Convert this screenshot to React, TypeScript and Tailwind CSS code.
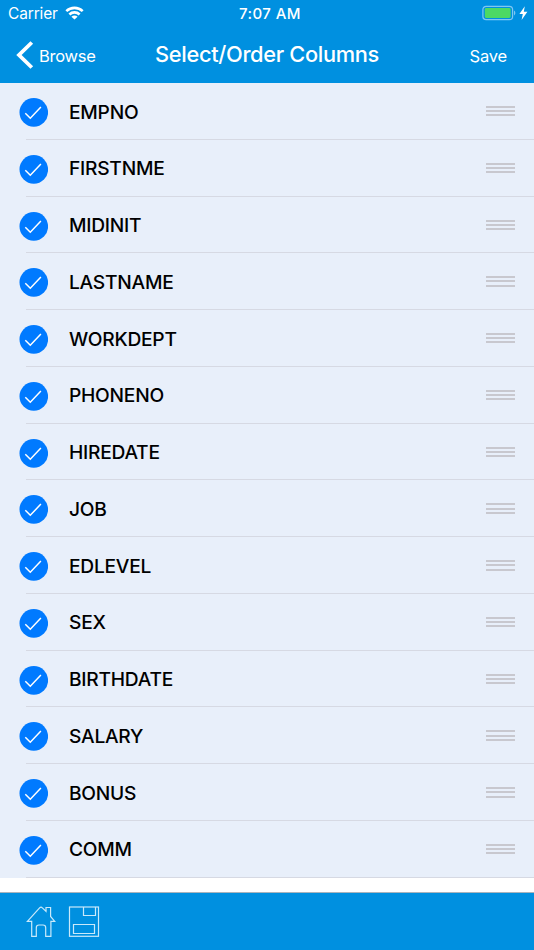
const columns = [
  "EMPNO",
  "FIRSTNME",
  "MIDINIT",
  "LASTNAME",
  "WORKDEPT",
  "PHONENO",
  "HIREDATE",
  "JOB",
  "EDLEVEL",
  "SEX",
  "BIRTHDATE",
  "SALARY",
  "BONUS",
  "COMM",
];

function StatusBar() {
  return (
    <div className="grid grid-cols-3 h-7 pl-2 pr-1.5 items-center">
      <div className="flex items-center gap-[7px]">
        <span className="text-[15.5px] leading-7 tracking-[-0.15px]">Carrier</span>
        <svg className="-mt-0.5" width="19" height="14" viewBox="0 0 18 14" fill="none" stroke="white" strokeWidth="2.6">
          <path d="M.8 5.1C5.4.8 12.6.8 17.2 5.1" />
          <path d="M3.9 8.5C6.7 5.7 11.3 5.7 14.1 8.5" />
          <path d="M9 13.6 5.9 10.7C7.8 9 10.2 9 12.1 10.7Z" fill="white" stroke="none" />
        </svg>
      </div>
      <span className="text-center pl-[4px] text-[15px] font-medium leading-7 tracking-[0.45px]">7:07 AM</span>
      <div className="flex items-center justify-end -mt-0.5">
        <svg width="46" height="16" viewBox="0 0 46 16">
          <rect x="0.9" y="1.3" width="29.7" height="13.4" rx="3.2" fill="none" stroke="#7fc7f1" strokeWidth="1.2" />
          <rect x="2.8" y="3.1" width="25.8" height="9.8" rx="1.4" fill="#4cd964" />
          <path d="M32 5.6c1.8.7 1.8 4.1 0 4.8Z" fill="#7fc7f1" />
          <path d="M42.8 1.2 37.4 9H40.8L39.6 15 45.4 6.8H41.8Z" fill="white" />
        </svg>
      </div>
    </div>
  );
}

function NavBar() {
  return (
    <div className="grid grid-cols-[130px_1fr_130px] h-[53px] items-center">
      <button className="flex items-center pl-4 gap-[5px]">
        <svg width="18" height="28" viewBox="0 0 18 28" fill="none" stroke="white" strokeWidth="3.8">
          <path d="M15.8 1.5 3 14 15.8 26.5" />
        </svg>
        <span className="text-[16.5px] pt-1 tracking-[-0.25px]">Browse</span>
      </button>
      <h1 className="text-center text-[21.8px] font-medium whitespace-nowrap tracking-[-0.33px]">
        Select/Order Columns
      </h1>
      <button className="text-right pr-[27px] pt-1 text-[16.5px] tracking-[-0.2px]">Save</button>
    </div>
  );
}

function ColumnRow({ name }: { name: string }) {
  return (
    <li className="flex h-[56.77px] pl-[19px]">
      <svg className="mt-[15px] shrink-0" width="29" height="29" viewBox="0 0 29 29">
        <circle cx="14.8" cy="14.4" r="14.3" fill="#007aff" />
        <path d="M6.3 15.2 11.3 20.2 21.9 9.1" fill="none" stroke="white" strokeWidth="1.5" />
      </svg>
      <span className="flex-1 pl-[21px] pt-[14.5px] text-[19.2px] leading-7 font-medium text-black tracking-[-0.25px]">
        {name}
      </span>
      <div className="flex flex-col gap-[2.2px] pt-[23px] pr-[19px]">
        <div className="w-[29px] h-0.5 bg-[#c8c8cf]" />
        <div className="w-[29px] h-0.5 bg-[#c8c8cf]" />
        <div className="w-[29px] h-0.5 bg-[#c8c8cf]" />
      </div>
    </li>
  );
}

export default function App() {
  return (
    <div className="flex flex-col w-[534px] h-[950px] overflow-hidden bg-white text-white font-['Inter','Liberation_Sans',sans-serif]">
      <header className="h-[83px] shrink-0 bg-[#0090e0]">
        <StatusBar />
        <NavBar />
      </header>
      <ul className="flex-1">
        {columns.map((name) => (
          <div key={name} className="bg-[#e8effa]">
            <ColumnRow name={name} />
            <div className="-mt-px ml-[26px] h-px bg-[#d6d9e3]" />
          </div>
        ))}
      </ul>
      <footer className="flex items-start h-[58px] shrink-0 pl-[26px] pt-[13px] gap-3 border-t border-[#a9b4bd] bg-[#0090e0]">
        <svg width="30" height="32" viewBox="0 0 30 32" fill="none" stroke="#c9e9fa" strokeWidth="1.2">
          <path d="M1.4 15.4 13.6 1.9Q15 .3 16.4 1.9L20 5.4V1.5H24.6V10.5L28.8 15.4H24.9V30.3H19.7V21.7Q19.7 19 17 19H13Q10.3 19 10.3 21.7V30.3H5.7V15.4Z" />
        </svg>
        <svg width="32" height="32" viewBox="0 0 32 32" fill="none" stroke="#c9e9fa" strokeWidth="1.2">
          <rect x="1.5" y="1" width="29" height="29.3" />
          <path d="M15.5 1V9.5H27.5V1M5.5 18.5H26.5V27.5H5.5Z" />
        </svg>
      </footer>
    </div>
  );
}
